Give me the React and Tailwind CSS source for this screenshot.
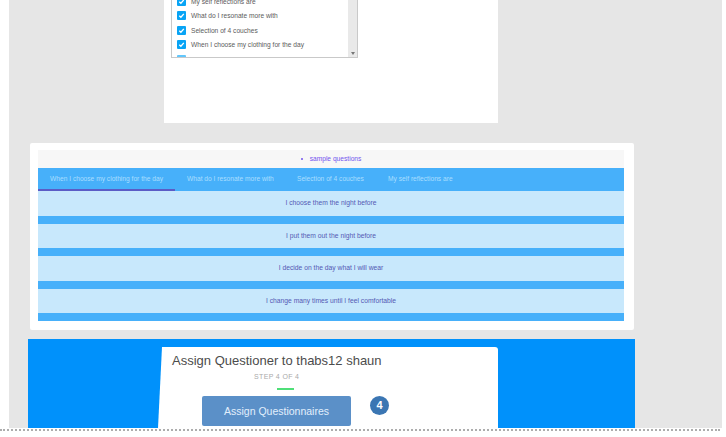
const options = [
  'My self reflections are',
  'What do I resonate more with',
  'Selection of 4 couches',
  'When I choose my clothing for the day',
];

const tabs = [
  { label: 'When I choose my clothing for the day', box: 'w-[137px] border-[#5b5cc6]' },
  { label: 'What do I resonate more with', box: 'w-[110px] border-transparent' },
  { label: 'Selection of 4 couches', box: 'w-[91px] border-transparent' },
  { label: 'My self reflections are', box: 'w-[90px] border-transparent' },
];

const answers = [
  'I choose them the night before',
  'I put them out the night before',
  'I decide on the day what I will wear',
  'I change many times until I feel comfortable',
];

function Check() {
  return (
    <span className="flex h-[9px] w-[9px] shrink-0 items-center justify-center rounded-[1px] bg-[#08a4f5]">
      <svg viewBox="0 0 9 9" className="h-[9px] w-[9px]" fill="none" stroke="white" strokeWidth="1.3">
        <path d="M2.3 4.7 3.9 6.2 6.8 2.9" />
      </svg>
    </span>
  );
}

function OptionsCard() {
  return (
    <section className="ml-[155px] h-[123px] w-[334px] bg-white pl-[7px]">
      <div className="flex h-[58px] w-[187px] overflow-hidden border-x border-b border-[#c9c9c9]">
        <ul className="-mt-[3px] w-[177px] pl-[5px]">
          {options.map((label) => (
            <li key={label} className="flex h-[14.4px] items-start gap-[5px]">
              <Check />
              <span className="whitespace-nowrap text-[6.65px] leading-[9px] text-[#5c5c5c]">{label}</span>
            </li>
          ))}
          <li>
            <span className="block h-[9px] w-[9px] rounded-[1px] bg-[#62c6fb]" />
          </li>
        </ul>
        <div className="flex w-[9px] items-end justify-center bg-[#e9e9e9] pb-[2px]">
          <svg viewBox="0 0 4 3" className="h-[3px] w-[4px]">
            <path d="M0 0h4L2 3z" fill="#777" />
          </svg>
        </div>
      </div>
    </section>
  );
}

function QuestionsCard() {
  return (
    <section className="ml-[21px] mt-[20px] h-[187px] w-[604px] rounded-[2px] bg-white pl-[8px] pt-[7px]">
      <div className="w-[586px] text-[6.65px]">
        <div className="flex h-[18px] items-center justify-center gap-[7px] bg-[#f7f7f7] text-[#7355ee]">
          <span className="h-[2px] w-[2px] rounded-full bg-[#7355ee]" />
          <span className="leading-[8px]">sample questions</span>
        </div>
        <div className="flex h-[23px] bg-[#47b0fa]">
          {tabs.map((t) => (
            <div key={t.label} className={`flex items-center whitespace-nowrap border-b-2 pl-[12px] pt-[1px] text-[#a9deff] ${t.box}`}>
              {t.label}
            </div>
          ))}
        </div>
        {answers.map((a) => (
          <div key={a} className="flex h-[32.5px] items-start border-b-[8px] border-[#47b0fa] bg-[#c8e8fc]">
            <p className="w-full pt-[8px] text-center text-[6.75px] leading-[8px] text-[#5459b4]">{a}</p>
          </div>
        ))}
      </div>
    </section>
  );
}

function AssignSection() {
  return (
    <section className="ml-[19px] mt-[9px] h-[89px] w-[607px] bg-[#0091fb] pl-[130px] pt-[8px]">
      <div className="h-[81px] w-[340px] rounded-tr-[3px] bg-white pl-[14px] pt-[5px] [clip-path:polygon(4px_0,100%_0,100%_100%,0_100%)]">
        <h2 className="whitespace-nowrap text-[13px] leading-[18px] text-[#4c4c4c]">Assign Questioner to thabs12 shaun</h2>
        <p className="ml-[82px] mt-[2px] whitespace-nowrap text-[7px] leading-[9px] tracking-[0.35px] text-[#aaa]">STEP 4 OF 4</p>
        <div className="ml-[105px] mt-[7px] h-[2px] w-[17px] bg-[#4fdf78]" />
        <div className="ml-[30px] mt-[6px] flex items-start">
          <button className="h-[30px] w-[149px] rounded-[2px] bg-[#5b90c8] text-[10.5px] leading-[28px] text-[#e2effc]">
            Assign Questionnaires
          </button>
          <span className="ml-[19px] flex h-[19px] w-[19px] items-center justify-center rounded-full bg-[#3b76b3] text-[11px] font-bold text-white">
            4
          </span>
        </div>
      </div>
    </section>
  );
}

export default function App() {
  return (
    <main className="h-[437px] w-[726px] overflow-hidden bg-white font-['Liberation_Sans',Arial,sans-serif]">
      <div className="ml-[9px] h-[428px] w-[713px] bg-[#e6e6e6]">
        <OptionsCard />
        <QuestionsCard />
        <AssignSection />
      </div>
      <div className="mt-[1px] w-[720px] border-t-2 border-dotted border-[#adadad]" />
    </main>
  );
}
